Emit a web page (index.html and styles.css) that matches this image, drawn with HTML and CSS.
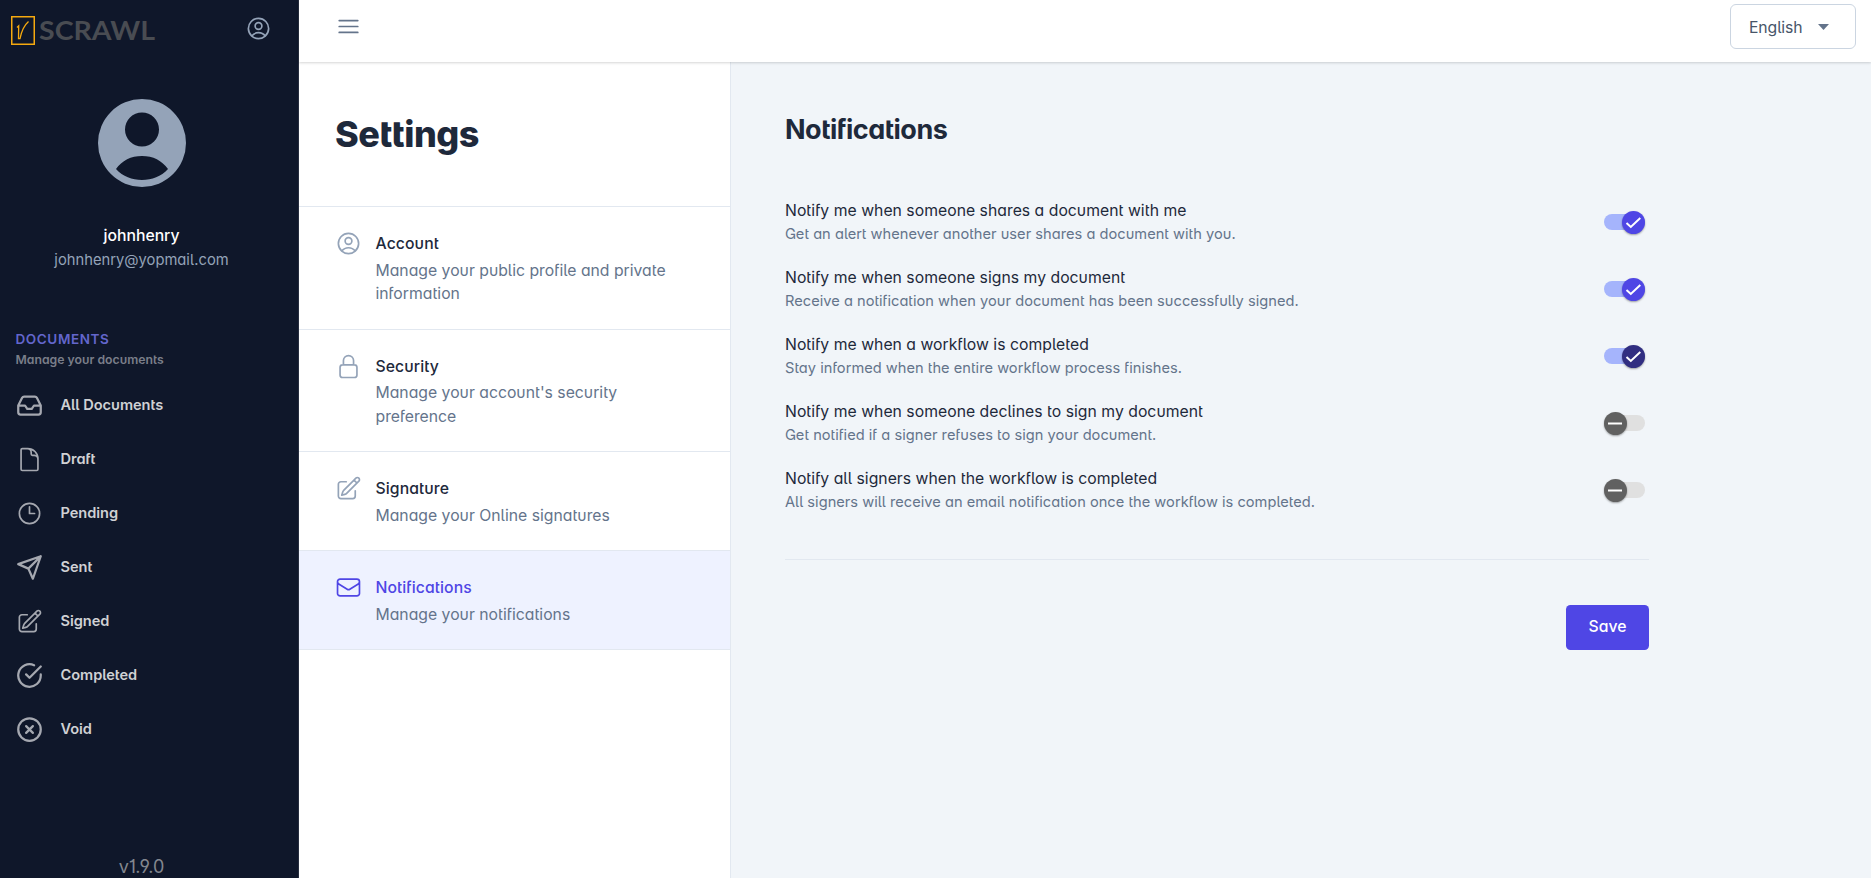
FILE: index.html
```html
<!DOCTYPE html>
<html lang="en">
<head>
<meta charset="utf-8">
<title>Settings</title>
<link rel="stylesheet" href="styles.css">
</head>
<body>
<svg class="defs" width="0" height="0">
  <symbol id="user" viewBox="0 0 24 24"><path d="M17.982 18.725A7.488 7.488 0 0 0 12 15.75a7.488 7.488 0 0 0-5.982 2.975m11.963 0a9 9 0 1 0-11.963 0m11.963 0A8.966 8.966 0 0 1 12 21a8.966 8.966 0 0 1-5.982-2.275M15 9.75a3 3 0 1 1-6 0 3 3 0 0 1 6 0Z"/></symbol>
  <symbol id="edit" viewBox="0 0 24 24"><path d="m16.862 4.487 1.687-1.688a1.875 1.875 0 1 1 2.652 2.652L10.582 16.07a4.5 4.5 0 0 1-1.897 1.13L6 18l.8-2.685a4.5 4.5 0 0 1 1.13-1.897l8.932-8.931ZM18 14v4.75A2.25 2.25 0 0 1 15.75 21H5.25A2.25 2.25 0 0 1 3 18.75V8.25A2.25 2.25 0 0 1 5.25 6H10M16.862 4.487 19.5 7.125"/></symbol>
</svg>
<div class="app">
  <aside class="sidebar">
    <div class="brand">
      <svg class="logo" width="150" height="40" viewBox="0 0 150 40">
        <rect x="1.75" y="1.75" width="22.5" height="27.5" fill="none" stroke="#f5a90f" stroke-width="1.5"/>
        <path d="M7 12.500L8.700 10.800 8.500 23.600H10C11.200 17.500 14 10.500 18.500 6.500" fill="none" stroke="#f5a90f" stroke-width="1.300"/>
        <text x="29" y="25.300" textLength="116" lengthAdjust="spacingAndGlyphs">SCRAWL</text>
      </svg>
      <svg class="icon"><use href="#user"/></svg>
    </div>
    <div class="profile">
      <svg class="avatar" viewBox="0 0 88 88"><path fill-rule="evenodd" d="M44 0a44 44 0 1 0 0 88a44 44 0 1 0 0-88ZM44 13.500a17 17 0 1 1 0 34a17 17 0 1 1 0-34ZM18 70C24 61.500 33 57 44 57S64 61.500 70 70C63 77.500 54 81 44 81S25 77.500 18 70Z"/></svg>
      <div class="name">johnhenry</div>
      <div class="email">johnhenry@yopmail.com</div>
    </div>
    <div class="group">
      <div class="group-title">DOCUMENTS</div>
      <div class="group-sub">Manage your documents</div>
    </div>
    <nav class="nav">
      <a class="nav-item"><svg class="icon bold" viewBox="0 0 24 24"><path d="M22 12h-6l-2 3h-4l-2-3H2M5.450 5.110L2 12v6a2 2 0 0 0 2 2h16a2 2 0 0 0 2-2v-6l-3.450-6.890A2 2 0 0 0 16.760 4H7.240a2 2 0 0 0-1.790 1.110z"/></svg><span>All Documents</span></a>
      <a class="nav-item"><svg class="icon" viewBox="0 0 24 24"><path d="M19.500 14.250v-2.625a3.375 3.375 0 0 0-3.375-3.375h-1.500A1.125 1.125 0 0 1 13.500 7.125v-1.500a3.375 3.375 0 0 0-3.375-3.375H8.250m2.250 0H5.625c-.621 0-1.125.504-1.125 1.125v17.250c0 .621.504 1.125 1.125 1.125h12.750c.621 0 1.125-.504 1.125-1.125V11.250a9 9 0 0 0-9-9Z"/></svg><span>Draft</span></a>
      <a class="nav-item"><svg class="icon" viewBox="0 0 24 24"><path d="M12 6v6h4.500m4.500 0a9 9 0 1 1-18 0 9 9 0 0 1 18 0Z"/></svg><span>Pending</span></a>
      <a class="nav-item"><svg class="icon bold" viewBox="0 0 24 24"><path d="M22 2L11 13M22 2l-7 20-4-9-9-4 20-7z"/></svg><span>Sent</span></a>
      <a class="nav-item"><svg class="icon"><use href="#edit"/></svg><span>Signed</span></a>
      <a class="nav-item"><svg class="icon bold" viewBox="0 0 24 24"><path d="M22 11.080V12a10 10 0 1 1-5.930-9.140M22 4L12 14.010l-3-3"/></svg><span>Completed</span></a>
      <a class="nav-item"><svg class="icon bold" viewBox="0 0 24 24"><circle cx="12" cy="12" r="10"/><path d="M15 9l-6 6M9 9l6 6"/></svg><span>Void</span></a>
    </nav>
    <div class="version">v1.9.0</div>
  </aside>
  <div class="main">
    <header class="topbar">
      <svg class="icon menu" viewBox="0 0 24 24"><path d="M3.750 6.750h16.500M3.750 12h16.500m-16.500 5.250h16.500"/></svg>
      <div class="lang"><span>English</span><svg width="11" height="6" viewBox="0 0 11 6"><path d="M0 0h11L5.500 6z" fill="#64748b"/></svg></div>
    </header>
    <div class="body">
      <section class="panel">
        <h1 class="panel-title">Settings</h1>
        <a class="item"><svg class="icon"><use href="#user"/></svg><div><div class="item-title">Account</div><div class="item-desc">Manage your public profile and private information</div></div></a>
        <a class="item"><svg class="icon" viewBox="0 0 24 24"><path d="M16.500 10.500V6.750a4.500 4.500 0 1 0-9 0v3.750m-.75 11.250h10.500a2.250 2.250 0 0 0 2.250-2.250v-6.750a2.250 2.250 0 0 0-2.250-2.250H6.750a2.250 2.250 0 0 0-2.250 2.250v6.750a2.250 2.250 0 0 0 2.250 2.250Z"/></svg><div><div class="item-title">Security</div><div class="item-desc">Manage your account's security preference</div></div></a>
        <a class="item"><svg class="icon"><use href="#edit"/></svg><div><div class="item-title">Signature</div><div class="item-desc">Manage your Online signatures</div></div></a>
        <a class="item active"><svg class="icon" viewBox="0 0 24 24"><path d="M21.750 6.750v10.500a2.250 2.250 0 0 1-2.250 2.250h-15a2.250 2.250 0 0 1-2.250-2.250V6.750m19.500 0A2.250 2.250 0 0 0 19.500 4.500h-15a2.250 2.250 0 0 0-2.250 2.250m19.500 0v.243a2.250 2.250 0 0 1-1.070 1.916l-7.500 4.615a2.250 2.250 0 0 1-2.360 0L3.320 8.910a2.250 2.250 0 0 1-1.070-1.916V6.750"/></svg><div><div class="item-title">Notifications</div><div class="item-desc">Manage your notifications</div></div></a>
      </section>
      <section class="content">
        <h2 class="content-title">Notifications</h2>
        <div class="prefs">
          <div class="pref"><div><div class="pref-title">Notify me when someone shares a document with me</div><div class="pref-desc">Get an alert whenever another user shares a document with you.</div></div><div class="toggle on"><div class="knob"><svg viewBox="0 0 23 23"><path d="M4.500 12l4.300 4L18.300 7"/></svg></div></div></div>
          <div class="pref"><div><div class="pref-title">Notify me when someone signs my document</div><div class="pref-desc">Receive a notification when your document has been successfully signed.</div></div><div class="toggle on"><div class="knob"><svg viewBox="0 0 23 23"><path d="M4.500 12l4.300 4L18.300 7"/></svg></div></div></div>
          <div class="pref"><div><div class="pref-title">Notify me when a workflow is completed</div><div class="pref-desc">Stay informed when the entire workflow process finishes.</div></div><div class="toggle on focused"><div class="knob"><svg viewBox="0 0 23 23"><path d="M4.500 12l4.300 4L18.300 7"/></svg></div></div></div>
          <div class="pref"><div><div class="pref-title">Notify me when someone declines to sign my document</div><div class="pref-desc">Get notified if a signer refuses to sign your document.</div></div><div class="toggle"><div class="knob"><svg viewBox="0 0 23 23"><path d="M4 11.500h14"/></svg></div></div></div>
          <div class="pref"><div><div class="pref-title">Notify all signers when the workflow is completed</div><div class="pref-desc">All signers will receive an email notification once the workflow is completed.</div></div><div class="toggle"><div class="knob"><svg viewBox="0 0 23 23"><path d="M4 11.500h14"/></svg></div></div></div>
        </div>
        <div class="actions"><button class="save">Save</button></div>
      </section>
    </div>
  </div>
</div>
</body>
</html>
```
FILE: styles.css
```css
* { box-sizing: border-box; }
body {
  margin: 0;
  font-family: Inter, "Liberation Sans", sans-serif;
  font-size: 15.75px;
  line-height: 23.6px;
  font-feature-settings: "salt", "cv11", "cv05";
  color: #1e293b;
}
.defs { display: block; height: 0; }
.app { display: flex; height: 878px; overflow: hidden; }
.icon {
  display: block;
  flex: none;
  width: 27px;
  height: 27px;
  fill: none;
  stroke: currentColor;
  stroke-width: 1.5;
  stroke-linecap: round;
  stroke-linejoin: round;
}
.icon.bold { stroke-width: 2; }

.sidebar {
  display: flex;
  flex-direction: column;
  flex: none;
  width: 299px;
  background: #0f172a;
  border-right: 1px solid #272e3f;
}
.brand {
  display: flex;
  justify-content: space-between;
  align-items: flex-start;
  height: 99px;
  padding: 15px 26px 0 10px;
  color: #94a3b8;
}
.logo { overflow: visible; }
.logo text { font: 700 27.5px Lato, sans-serif; fill: #494c52; }
.profile {
  display: flex;
  flex-direction: column;
  align-items: center;
  height: 229px;
  padding-right: 15px;
}
.avatar { width: 88px; height: 88px; margin-bottom: 36px; fill: #94a3b8; }
.name { font-weight: 500; color: #fff; line-height: 25px; }
.email { font-size: 14.75px; color: #94a3b8; line-height: 24px; }
.group { height: 51px; padding-left: 15.5px; }
.group-title {
  font-size: 13.5px;
  font-weight: 600;
  letter-spacing: .6px;
  color: #6366cc;
  line-height: 22px;
}
.group-sub { font-size: 12.25px; font-weight: 600; color: #7a7e89; line-height: 20px; }
.nav-item {
  display: flex;
  align-items: center;
  gap: 17.5px;
  height: 54px;
  padding: 0 0 1px 16px;
  color: #a5a8b0;
}
.nav-item span { font-size: 14.6px; font-weight: 600; letter-spacing: -.05px; color: #cfd1d4; }
.version {
  margin-top: auto;
  margin-bottom: -1px;
  padding-right: 15px;
  text-align: center;
  font-size: 18px;
  line-height: 24px;
  color: #83878f;
}

.main { display: flex; flex-direction: column; flex: 1; }
.topbar {
  position: relative;
  display: flex;
  justify-content: space-between;
  align-items: flex-start;
  height: 62px;
  padding: 4px 15px 0 36px;
  background: #fff;
  box-shadow: 0 1px 3px rgba(0,0,0,.1), 0 1px 2px rgba(0,0,0,.07);
}
.menu { margin-top: 9px; color: #64748b; }
.lang {
  display: flex;
  align-items: center;
  justify-content: space-between;
  width: 126px;
  height: 45px;
  padding: 0 26px 0 18px;
  border: 1px solid #cbd5e1;
  border-radius: 6px;
  color: #475569;
}
.lang span { padding-top: 2px; letter-spacing: -.1px; }
.body { display: flex; flex: 1; }
.panel { width: 432px; background: #fff; border-right: 1px solid #e2e8f0; }
.panel-title {
  margin: 0;
  height: 145px;
  padding: 47px 36px 0;
  border-bottom: 1px solid #e2e8f0;
  font-size: 36px;
  font-weight: 800;
  line-height: 50px;
  letter-spacing: -.5px;
}
.item {
  display: flex;
  gap: 13.5px;
  padding: 23px 36px 22.5px;
  border-bottom: 1px solid #e2e8f0;
  color: #94a3b8;
}
.item-title { padding-top: 1px; font-weight: 450; letter-spacing: .09px; color: #1e293b; line-height: 26px; }
.item-desc { margin-top: 1.9px; color: #64748b; }
.item.active { background: #eef2ff; color: #4f46e5; }
.item.active .item-title { color: #4f46e5; }

.content { flex: 1; padding: 46px 222px 0 54px; background: #f1f5f9; }
.content-title { margin: 0; font-size: 27px; font-weight: 700; line-height: 44px; letter-spacing: -.5px; }
.prefs { height: 408px; padding-top: 47px; border-bottom: 1px solid #e2e8f0; }
.pref { display: flex; justify-content: space-between; height: 67px; }
.pref-title { line-height: 24px; letter-spacing: .02px; }
.pref-desc { font-size: 14.63px; letter-spacing: .02px; line-height: 23px; color: #64748b; }
.toggle {
  display: flex;
  align-items: center;
  width: 41px;
  height: 16px;
  margin: 15px 4px 0 0;
  border-radius: 8px;
  background: #e0e0e0;
}
.toggle.on { justify-content: flex-end; background: #a5b4fc; }
.knob {
  flex: none;
  width: 23px;
  height: 23px;
  border-radius: 50%;
  background: #616161;
  box-shadow: 0 1px 2px rgba(0,0,0,.35);
}
.knob svg { display: block; fill: none; stroke: #fff; stroke-width: 2; }
.toggle.on .knob { background: #4f46e5; }
.toggle.focused .knob { background: #312e81; }
.actions { display: flex; justify-content: flex-end; padding-top: 45px; }
.save {
  width: 83px;
  height: 45px;
  padding: 0 0 2px;
  border: 0;
  border-radius: 4.5px;
  background: #4f46e5;
  color: #fff;
  font: 500 15.75px Inter, sans-serif;
  font-feature-settings: inherit;
}
```
